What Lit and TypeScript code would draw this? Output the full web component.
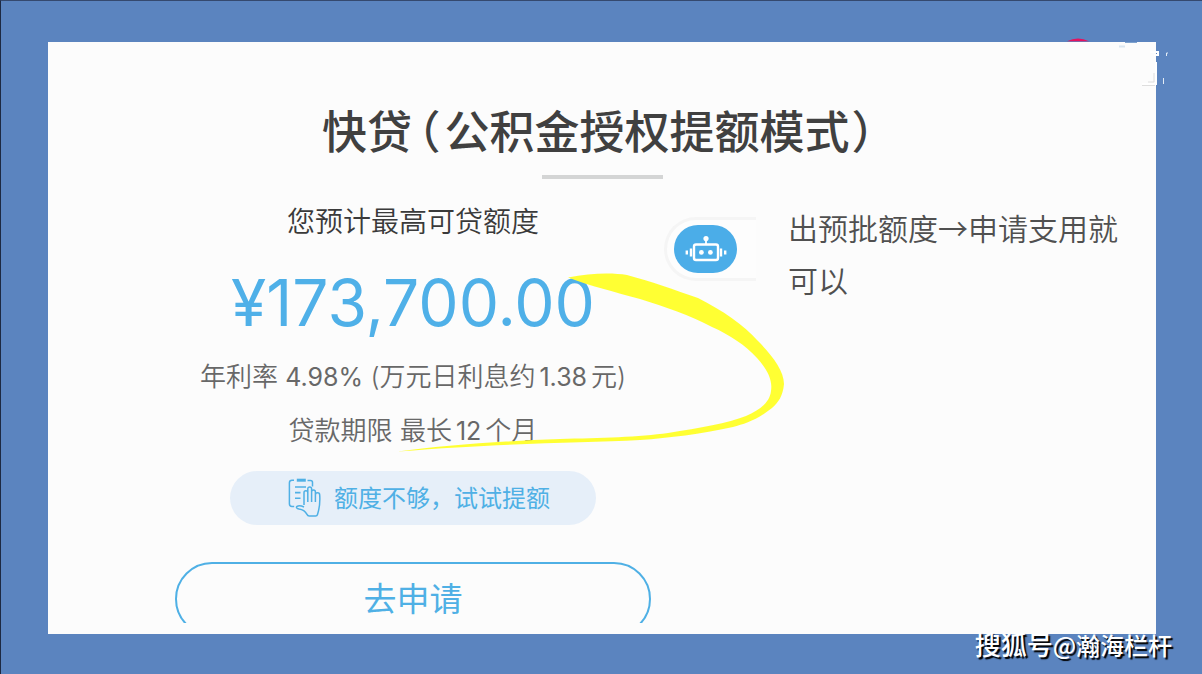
import { LitElement, html, css, svg } from "lit";
import { customElement } from "lit/decorators.js";

const robotIcon = svg`
  <svg class="robot-icon" viewBox="0 0 42 26" fill="none" stroke="#fff" aria-hidden="true">
    <rect x="9" y="8.5" width="24" height="15.5" rx="2" stroke-width="2.4"/>
    <path d="M21 3v5" stroke-width="1.8"/>
    <circle cx="21" cy="2.6" r="2.6" fill="#fff" stroke="none"/>
    <circle cx="16.4" cy="16.4" r="2.4" fill="#fff" stroke="none"/>
    <circle cx="25.4" cy="16.4" r="2.4" fill="#fff" stroke="none"/>
    <path d="M6 12.5v8M36 12.5v8" stroke-width="2.4"/>
    <path d="M1.8 14.5v4M40.2 14.5v4" stroke-width="2.4"/>
  </svg>`;

const limitIcon = svg`
  <svg class="limit-icon" viewBox="0 0 34 40" fill="none" stroke="#4fb0e5" stroke-width="1.5" aria-hidden="true">
    <path d="M6 2.2H4a2.6 2.6 0 0 0-2.6 2.6v21A2.6 2.6 0 0 0 4 28.400h2.200"/>
    <path d="M19.500 2.600h3a2 2 0 0 1 2 2v4"/>
    <path d="M8.800 2.200h9" stroke-width="3"/>
    <path d="M7 9h11M7 14.600h5.500M7 20.200h5.500" stroke-width="1.600"/>
    <path d="M16 27V14.600a1.900 1.900 0 0 1 3.800 0V24M19.800 15V10.800a1.900 1.900 0 0 1 3.800 0V24M23.600 14a1.900 1.900 0 0 1 3.800 0v10M27.400 17a2.100 2.100 0 0 1 4.300 0c.5 7 .3 11.500-2.200 19.500a2 2 0 0 1-1.900 1.500h-6.400c-1.400 0-1.800-.6-2.400-1.800-1.700-3.300-3.600-4.600-7.800-5.200-2.400-.4-3.200-1.800-2-2.600 1.800-1.200 4.500-.6 7 .6"/>
  </svg>`;

@customElement("app-root")
export class AppRoot extends LitElement {
  static styles = css`
    :host {
      display: block;
      font-family: "Noto Sans CJK SC", sans-serif;
      color: #3e3e3e;
    }
    * {
      box-sizing: border-box;
    }
    button {
      font: inherit;
      cursor: pointer;
    }
    .stage {
      position: relative;
      min-height: 100vh;
      display: flex;
      padding: 41px 46px 40px 47px;
      background: #5b84bf;
      border-top: 1px solid #35496e;
      border-left: 1px solid #1d2942;
    }
    .card {
      position: relative;
      flex: 1;
      background: #fcfcfc;
      display: flex;
      flex-direction: column;
    }
    .badge {
      position: absolute;
      top: -4px;
      right: 66px;
      width: 24px;
      height: 4px;
    }
    .remnant {
      position: absolute;
      top: 0;
      right: -12px;
      width: 52px;
      height: 46px;
    }
    .heading {
      display: flex;
      flex-direction: column;
      align-items: center;
      padding-top: 58px;
      gap: 15px;
    }
    h1 {
      margin: 0;
      font-size: 45px;
      line-height: 60px;
      font-weight: 500;
      color: #404040;
      white-space: nowrap;
    }
    .paren {
      font-feature-settings: "halt";
      padding: 0 4px 0 6px;
    }
    .paren.close {
      padding: 0 8px 0 2px;
    }
    .rule {
      width: 121px;
      height: 4px;
      background: #d4d5d5;
    }
    .columns {
      display: grid;
      grid-template-columns: 730fr 378fr;
      flex: 1;
    }
    .offer {
      position: relative;
      display: flex;
      flex-direction: column;
      align-items: center;
      padding-top: 23px;
    }
    p {
      margin: 0;
    }
    .caption {
      font-size: 28px;
      line-height: 36px;
      font-weight: 350;
      color: #3a3a3a;
    }
    .amount {
      margin-top: 27px;
      font-family: Inter, sans-serif;
      font-size: 64px;
      line-height: 76px;
      color: #4fb0e8;
    }
    .terms {
      font-family: Inter, "Noto Sans CJK SC", sans-serif;
      font-size: 26px;
      line-height: 36px;
      font-weight: 350;
      color: #686868;
    }
    .num {
      font-size: 25px;
      font-weight: 400;
    }
    .tight {
      padding: 0 4px;
    }
    .rate {
      margin-top: 18px;
    }
    .period {
      margin-top: 18px;
    }
    .raise {
      margin-top: 22px;
      width: 366px;
      height: 54px;
      border: 0;
      border-radius: 27px;
      background: #e6eff9;
      color: #4fb0e5;
      font-size: 24px;
      display: flex;
      align-items: center;
      justify-content: center;
      gap: 12px;
      padding: 0 0 0 12px;
    }
    .raise-label {
      padding-bottom: 4px;
    }
    .limit-icon {
      width: 34px;
      height: 40px;
    }
    .apply-clip {
      margin-top: 37px;
      height: 61px;
      overflow: hidden;
    }
    .apply {
      display: block;
      width: 476px;
      height: 74px;
      border: 2px solid #4fb0e5;
      border-radius: 37px;
      background: transparent;
      color: #4fb0e5;
      font-size: 33px;
      padding: 0 0 4px;
    }
    .assistant {
      position: absolute;
      top: 38px;
      right: 22px;
      width: 92px;
      height: 64px;
      padding: 5px 0 5px 7px;
      border: 3px solid #f5f5f5;
      border-right: 0;
      border-radius: 32px 0 0 32px;
      background: #fdfdfd;
    }
    .assistant-face {
      display: flex;
      align-items: center;
      justify-content: center;
      width: 63px;
      height: 48px;
      border-radius: 24px;
      background: #4bade8;
    }
    .robot-icon {
      width: 42px;
      height: 26px;
    }
    .stroke {
      position: absolute;
      top: 93px;
      left: 350px;
      width: 390px;
      height: 180px;
      pointer-events: none;
    }
    .note {
      padding: 22px 30px 0 10px;
      font-size: 30px;
      line-height: 52px;
      font-weight: 350;
      color: #505050;
    }
    .watermark {
      position: absolute;
      right: 30px;
      bottom: 11px;
      font-size: 24px;
      line-height: 36px;
      font-weight: 500;
      color: #fff;
      text-shadow: 2px 2px 1px #000;
      white-space: nowrap;
    }
    .site {
      font-size: 26px;
    }
  `;

  render() {
    return html`
      <main class="stage">
        <section class="card">
          <svg class="badge" viewBox="0 0 24 4" aria-hidden="true">
            <path d="M1 3.200Q12-2 23 3.200z" fill="#e5125f"/>
          </svg>
          <svg class="remnant" viewBox="0 0 52 46" fill="none" aria-hidden="true">
            <path d="M9 .5h12" stroke="#7fa3cf"/>
            <path d="M3 4.500h6" stroke="#dbe6f0" stroke-width="2"/>
            <path d="M34 10h8v3h-4M40 20v22H26" stroke="#fff" stroke-width="2"/>
            <path d="M38 31v9h-6M26 43.500h13" stroke="#dedede"/>
            <path d="M50.500 14v-3h2M47.500 36v6" stroke="#e2ebf5"/>
          </svg>
          <header class="heading">
            <h1>快贷<span class="paren">（</span>公积金授权提额模式<span class="paren close">）</span></h1>
            <div class="rule"></div>
          </header>
          <div class="columns">
            <div class="offer">
              <p class="caption">您预计最高可贷额度</p>
              <p class="amount">¥173,700.00</p>
              <p class="terms rate">年利率 <span class="num">4.98%</span> (万元日利息约<span class="num tight">1.38</span>元)</p>
              <p class="terms period">贷款期限 最长<span class="num tight">12</span>个月</p>
              <button class="raise" type="button">${limitIcon}<span class="raise-label">额度不够，试试提额</span></button>
              <div class="apply-clip">
                <button class="apply" type="button">去申请</button>
              </div>
              <button class="assistant" type="button" aria-label="智能客服">
                <span class="assistant-face">${robotIcon}</span>
              </button>
              <svg class="stroke" viewBox="398 272 390 180" aria-hidden="true">
                <path fill="#ffff33" d="M568 277.500C590 273 612 272.500 627 275C650 281 675 290 698 298C722 310 745 326 757 340C771 354 784 370 784 384C783 396 778 403 772 408C757 420 745 424 733 427C700 434 670 438 640 440C580 443 500 443 398 451.500C440 446 500 441 560 439C600 438 640 437 668 433C700 428 728 423 746 416C760 410 770 402 771 391C773 379 766 368 757 358C745 345 730 335 712 327C690 315 665 307 640 299C615 292 590 286 568 277.500z"/>
              </svg>
            </div>
            <p class="note">出预批额度→申请支用就可以</p>
          </div>
        </section>
        <div class="watermark"><span class="site">搜狐号</span>@瀚海栏杆</div>
      </main>
    `;
  }
}
